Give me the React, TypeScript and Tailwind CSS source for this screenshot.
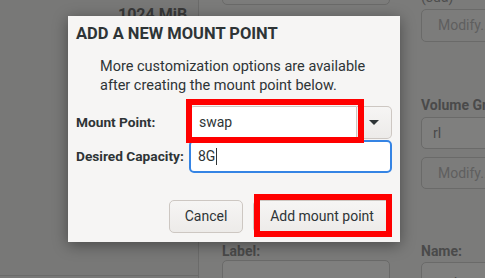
export default function App() {
  return (
    <div className="relative w-[485px] h-[278px] overflow-hidden bg-[#7b7b7a] font-['Roboto',sans-serif]">
      {/* dimmed background window */}
      <div className="flex h-full">
        <div className="w-[199px] shrink-0 h-full border-r border-[#6b6b6a] bg-[#787877] flex flex-col">
          <div className="h-[275px] shrink-0 overflow-hidden">
            <div className="pl-[118px] pt-[6px] text-[16px] leading-[18px] font-bold text-[#383838]">1024 MiB</div>
          </div>
          <div className="border-t border-[#6b6b6a]" />
        </div>
        <div className="flex pl-[23px] gap-[31px]">
          <div className="w-[168px] shrink-0 flex flex-col">
            <div className="shrink-0 mt-[-28px] h-[33px] rounded-[5px] border border-[#6a6a69] bg-[#7c7c7b]" />
            <div className="shrink-0 mt-[238px] text-[14px] leading-[16px] font-bold text-[#4a4a4a]">Label:</div>
            <div className="shrink-0 mt-[1px] h-[33px] rounded-[5px] border border-[#6a6a69] bg-[#7f7f7e]" />
          </div>
          <div className="w-[170px] shrink-0 flex flex-col">
            <div className="shrink-0 mt-[-11px] text-[14px] leading-[16px] text-[#4e4e4e]">(sda)</div>
            <div className="shrink-0 mt-[4px] h-[33px] rounded-[5px] border border-[#6a6a69] bg-[#7c7c7b] flex items-center pl-[16px] text-[14px] text-[#5f5f5f]">Modify...</div>
            <div className="shrink-0 mt-[55px] text-[14px] leading-[16px] font-bold text-[#4a4a4a]">Volume Group:</div>
            <div className="shrink-0 mt-[4px] h-[32px] rounded-[5px] border border-[#6a6a69] bg-[#7f7f7e] flex items-center pl-[11px] text-[14px] text-[#4a4a4a]">rl</div>
            <div className="shrink-0 mt-[8px] h-[32px] rounded-[5px] border border-[#6a6a69] bg-[#7c7c7b] flex items-center pl-[16px] text-[14px] text-[#5f5f5f]">Modify...</div>
            <div className="shrink-0 mt-[54px] text-[14px] leading-[16px] font-bold text-[#4a4a4a]">Name:</div>
            <div className="shrink-0 mt-[3px] h-[33px] rounded-[5px] border border-[#6a6a69] bg-[#7f7f7e] flex pl-[11px] pt-[9px] text-[14px] text-[#4a4a4a]">root</div>
          </div>
        </div>
      </div>

      {/* dialog */}
      <div className="absolute left-[68px] top-[16px] w-[332px] h-[226px] bg-[#f6f5f4] shadow-[0_3px_14px_rgba(0,0,0,0.4)] flex flex-col text-[#2e3436]">
        <div className="pl-[8px] pt-[8px] text-[16.5px] leading-[20px] font-bold">ADD A NEW MOUNT POINT</div>
        <div className="pl-[32px] mt-[13px] text-[14.5px] leading-[19px]">
          More customization options are available
          <br />
          after creating the mount point below.
        </div>
        <div className="mt-[11px] grid grid-cols-[113px_203px] gap-y-[1px] pl-[8px] items-center">
          <div className="text-[13.7px] font-bold whitespace-nowrap">Mount Point:</div>
          <div className="flex h-[33px]">
            <div className="w-[168px] h-full bg-white border border-[#cdc7c2] rounded-l-[5px] flex items-center pl-[9px] text-[14px]">swap</div>
            <div className="flex-1 h-full bg-gradient-to-b from-[#f6f5f4] to-[#edebe9] border border-l-0 border-[#cdc7c2] rounded-r-[5px] flex items-center justify-center">
              <svg width="10" height="5" viewBox="0 0 10 5">
                <polygon points="0,0 10,0 5,5" fill="#2e3436" />
              </svg>
            </div>
          </div>
          <div className="text-[13.7px] font-bold whitespace-nowrap">Desired Capacity:</div>
          <div className="h-[33px] bg-white border-2 border-[#3584e4] rounded-[5px] flex items-center pl-[7px] text-[14px]">
            8G<span className="ml-[1px] w-[1px] h-[17px] bg-[#2e3436]" />
          </div>
        </div>
        <div className="mt-[27px] flex justify-end pr-[9px] gap-[10px]">
          <div className="w-[74px] h-[33px] rounded-[5px] border border-[#cdc7c2] bg-gradient-to-b from-[#f6f5f4] to-[#edebe9] flex items-center justify-center text-[14px]">Cancel</div>
          <div className="w-[138px] h-[33px] rounded-[5px] border border-[#cdc7c2] bg-gradient-to-b from-[#f6f5f4] to-[#edebe9] flex items-center justify-center text-[14px]">Add mount point</div>
        </div>

        {/* red highlight boxes */}
        <div className="absolute left-[118px] top-[83px] w-[178px] h-[44px] border-[6px] border-[#ff0000]" />
        <div className="absolute left-[186px] top-[178px] w-[138px] h-[43px] border-[6px] border-[#ff0000]" />
      </div>
    </div>
  );
}
